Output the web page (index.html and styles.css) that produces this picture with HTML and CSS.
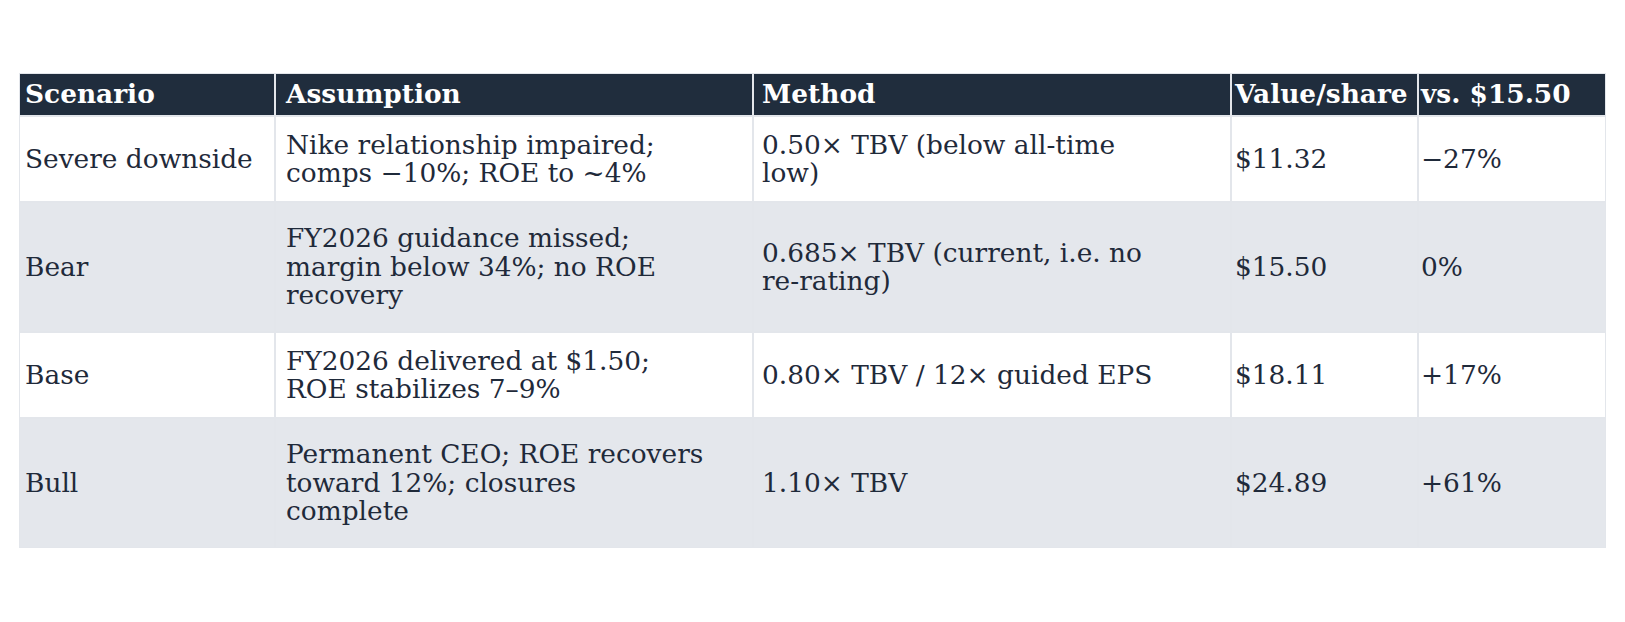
FILE: index.html
```html
<!DOCTYPE html>
<html lang="en">
<head>
<meta charset="utf-8">
<title>Scenarios</title>
<link rel="stylesheet" href="styles.css">
</head>
<body>
<div class="wrap">
<table class="scen">
  <colgroup>
    <col class="w1">
    <col class="w2">
    <col class="w3">
    <col class="w4">
    <col class="w5">
  </colgroup>
  <thead>
    <tr class="h1">
      <th class="c1">Scenario</th>
      <th class="c2">Assumption</th>
      <th class="c3">Method</th>
      <th class="c4">Value/share</th>
      <th class="c5">vs. $15.50</th>
    </tr>
  </thead>
  <tbody>
    <tr class="h2">
      <td class="c1">Severe downside</td>
      <td class="c2">Nike relationship impaired; comps −10%; ROE to ~4%</td>
      <td class="c3">0.50× TBV (below all-time low)</td>
      <td class="c4">$11.32</td>
      <td class="c5">−27%</td>
    </tr>
    <tr class="alt h3">
      <td class="c1">Bear</td>
      <td class="c2">FY2026 guidance missed; margin below 34%; no ROE recovery</td>
      <td class="c3">0.685× TBV (current, i.e. no re-rating)</td>
      <td class="c4">$15.50</td>
      <td class="c5">0%</td>
    </tr>
    <tr class="h2">
      <td class="c1">Base</td>
      <td class="c2">FY2026 delivered at $1.50; ROE stabilizes 7–9%</td>
      <td class="c3">0.80× TBV / 12× guided EPS</td>
      <td class="c4">$18.11</td>
      <td class="c5">+17%</td>
    </tr>
    <tr class="alt h3">
      <td class="c1">Bull</td>
      <td class="c2">Permanent CEO; ROE recovers toward 12%; closures complete</td>
      <td class="c3">1.10× TBV</td>
      <td class="c4">$24.89</td>
      <td class="c5">+61%</td>
    </tr>
  </tbody>
</table>
</div>
</body>
</html>
```
FILE: styles.css
```css
html, body {
  margin: 0;
  padding: 0;
  background: #ffffff;
}
.wrap {
  padding: 73px 19px 0 19px;
}
.scen {
  width: 1587px;
  border-collapse: separate;
  border-spacing: 0;
  table-layout: fixed;
  font-family: "DejaVu Serif", serif;
  font-size: 26.4px;
  line-height: 28.5px;
  color: #1f2a3a;
}
.w1 { width: 256px; }
.w2 { width: 478px; }
.w3 { width: 478px; }
.w4 { width: 187px; }
.w5 { width: 188px; }
.h1 { height: 43px; }
.h2 { height: 86px; }
.h3 { height: 130px; }
.scen th,
.scen td {
  border: 1px solid #e3e6eb;
  padding: 0;
  text-align: left;
  vertical-align: middle;
  font-weight: normal;
}
.scen th {
  background: #202d3d;
  color: #ffffff;
  font-weight: bold;
}
.scen tr.alt td {
  background: #e4e7ec;
}
.scen .c1 { padding-left: 5px; }
.scen .c2 { padding-left: 10px; padding-right: 47px; }
.scen .c3 { padding-left: 8px; padding-right: 52px; }
.scen .c4 { padding-left: 3px; }
.scen .c5 { padding-left: 2px; }
```
